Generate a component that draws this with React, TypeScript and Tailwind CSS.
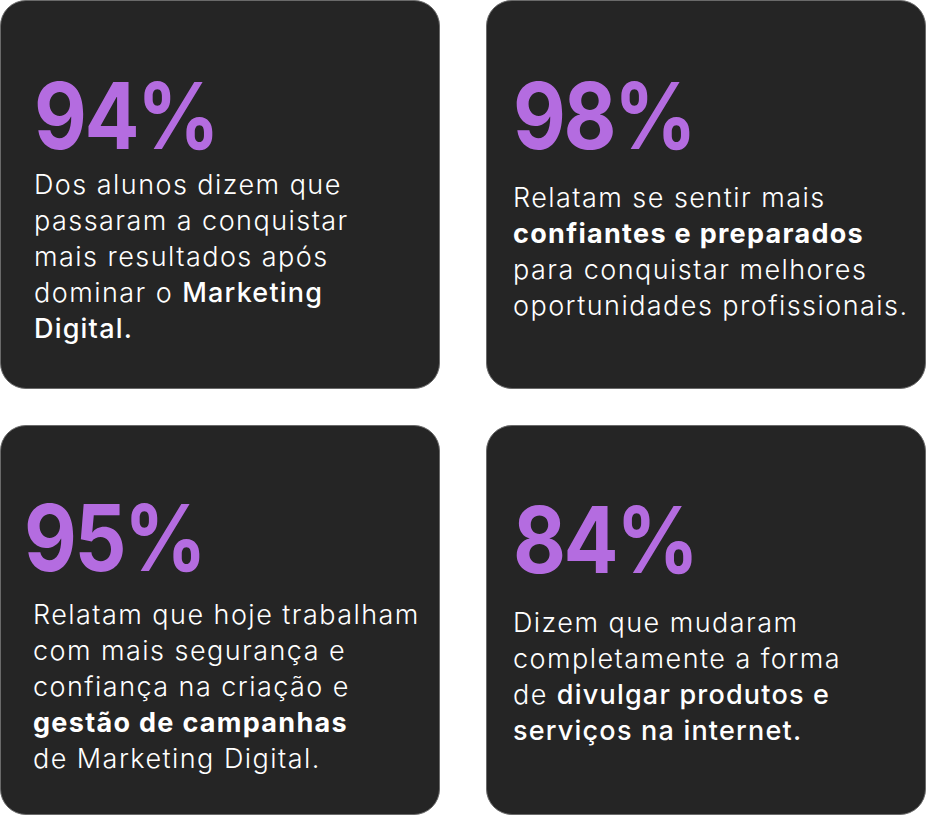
import React from "react";

const num = "inline-block origin-left scale-x-[0.885] text-[92px] leading-none font-bold tracking-[-0.03em] text-[#b46ce0]";
const body = "text-[27px] leading-[36px] font-light tracking-[1.45px] text-white whitespace-nowrap";

export default function App() {
  return (
    <div className="w-[926px] h-[815px] bg-white" style={{ fontFamily: "Inter, 'Noto Sans', sans-serif" }}>
      <div className="grid grid-cols-[440px_440px] grid-rows-[389px_390px] gap-x-[46px] gap-y-[36px]">
        <div className="rounded-[26px] bg-[#252525] border border-[#6a6a6a] pl-[33px] pt-[69px]">
          <div className="h-[92px]"><span className={num}>94%</span></div>
          <p className={`${body} mt-[5px]`}>
            Dos alunos dizem que<br />
            passaram a conquistar<br />
            mais resultados após<br />
            dominar o <span className="font-medium tracking-[1.2px]">Marketing</span><br />
            <span className="font-medium tracking-[1.2px]">Digital.</span>
          </p>
        </div>
        <div className="rounded-[26px] bg-[#252525] border border-[#6a6a6a] pl-[26px] pt-[69px]">
          <div className="h-[92px]"><span className={num}>98%</span></div>
          <p className={`${body} mt-[18px]`}>
            Relatam se sentir mais<br />
            <span className="font-bold tracking-[1.3px]">confiantes e preparados</span><br />
            para conquistar melhores<br />
            oportunidades profissionais.
          </p>
        </div>
        <div className="rounded-[26px] bg-[#252525] border border-[#6a6a6a] pt-[66px]">
          <div className="h-[92px] pl-[23px]"><span className={num}>95%</span></div>
          <p className={`${body} mt-[13px] pl-[32px]`}>
            Relatam que hoje trabalham<br />
            com mais segurança e<br />
            confiança na criação e<br />
            <span className="font-bold tracking-[1.3px]">gestão de campanhas</span><br />
            de Marketing Digital.
          </p>
        </div>
        <div className="rounded-[26px] bg-[#252525] border border-[#6a6a6a] pl-[26px] pt-[68px]">
          <div className="h-[92px]"><span className={num}>84%</span></div>
          <p className={`${body} mt-[19px]`}>
            Dizem que mudaram<br />
            completamente a forma<br />
            de <span className="font-medium tracking-[1.2px]">divulgar produtos e</span><br />
            <span className="font-medium tracking-[1.2px]">serviços na internet.</span>
          </p>
        </div>
      </div>
    </div>
  );
}
